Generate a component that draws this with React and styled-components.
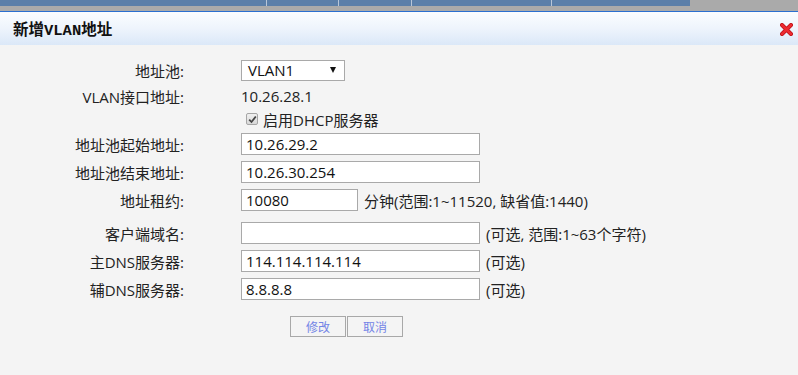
import React from 'react'
import styled, { createGlobalStyle } from 'styled-components'

const GlobalStyle = createGlobalStyle`
  html, body {
    margin: 0;
    padding: 0;
    background: #f4f4f4;
  }
  body {
    font-family: "Open Sans", "Noto Sans CJK SC", sans-serif;
    color: #222;
  }
`

const Page = styled.div`
  width: 798px;
  height: 375px;
  overflow: hidden;
  background: #f4f4f4;
`

const TopNav = styled.div`
  display: flex;
  height: 6px;
  background: #aaaaaa;
  border-bottom: 5px solid #aaaaaa;
`

const NavTab = styled.div`
  width: ${p => p.w}px;
  background: #5b7fa9;
  border-right: 1px solid #b8c6d8;
  &:last-child {
    border-right: none;
  }
`

const TitleBar = styled.div`
  height: 33px;
  border-top: 1px solid #2b6fd0;
  background: linear-gradient(to bottom, #fbfdff 0%, #eef4fc 50%, #dbe8f8 100%);
  display: flex;
  align-items: center;
  justify-content: space-between;
  padding: 0 5px 0 13px;
`

const Title = styled.h1`
  margin: 0;
  font-family: "Liberation Mono", "Noto Sans CJK SC", monospace;
  font-weight: bold;
  font-size: 15.5px;
  color: #111;
`

const CloseBtn = styled.svg`
  width: 13px;
  height: 13px;
  margin-top: 1px;
`

const Form = styled.div`
  display: flex;
  flex-direction: column;
  padding-top: 11px;
`

const Row = styled.div`
  display: grid;
  grid-template-columns: 184px 1fr;
  column-gap: 57px;
  align-items: center;
  height: ${p => p.h || 28}px;
  margin-top: ${p => p.mt || 0}px;
`

const Label = styled.div`
  text-align: right;
  font-size: 15px;
  color: #222;
  white-space: nowrap;
`

const Field = styled.div`
  display: flex;
  align-items: center;
  gap: 6px;
  font-size: 15px;
  color: #222;
  white-space: nowrap;
`

const TextInput = styled.div`
  box-sizing: border-box;
  width: ${p => p.w || 239}px;
  height: 22px;
  border: 1px solid #a9a9a9;
  background: #fff;
  padding: 0 4px;
  font-size: 15px;
  line-height: 20px;
  color: #111;
`

const SelectBox = styled.div`
  box-sizing: border-box;
  width: 104px;
  height: 21px;
  border: 1px solid #a9a9a9;
  background: #fff;
  display: flex;
  align-items: center;
  justify-content: space-between;
  padding: 0 8px 0 6px;
  font-size: 15px;
  color: #111;
`

const Arrow = styled.span`
  width: 0;
  height: 0;
  border-left: 3.5px solid transparent;
  border-right: 3.5px solid transparent;
  border-top: 6px solid #111;
`

const Check = styled.span`
  box-sizing: border-box;
  width: 12px;
  height: 12px;
  margin-left: 5px;
  border: 1px solid #a6a6a6;
  border-radius: 2px;
  background: linear-gradient(to bottom, #f0f0f0, #d8d8d8);
  display: flex;
  align-items: center;
  justify-content: center;
`

const CheckText = styled.span`
  font-size: 15px;
  margin-left: -1px;
`

const Hint = styled.span`
  font-size: 15px;
  color: #222;
`

const Buttons = styled.div`
  display: flex;
  gap: 1px;
  margin: 13px 0 0 290px;
`

const Button = styled.button`
  box-sizing: border-box;
  width: 56px;
  height: 21px;
  border: 1px solid #a8a8a8;
  background: #f4f4f4;
  color: #7384e6;
  font-family: "Noto Sans CJK SC", sans-serif;
  font-size: 12px;
  padding: 0;
  line-height: 19px;
`

const tabs = [266, 71, 72, 139, 138]

const App = () => {
  return (
    <Page>
      <GlobalStyle />
      <TopNav>
        {tabs.map((w, i) => <NavTab key={i} w={w} />)}
      </TopNav>
      <TitleBar>
        <Title>新增VLAN地址</Title>
        <CloseBtn viewBox="0 0 13 13">
          <path d="M2 2 L11 11 M11 2 L2 11" stroke="#b80d14" strokeWidth="4" strokeLinecap="round" />
          <path d="M2 2 L11 11 M11 2 L2 11" stroke="#ec2a30" strokeWidth="2.6" strokeLinecap="round" />
        </CloseBtn>
      </TitleBar>
      <Form>
        <Row h={28}>
          <Label>地址池:</Label>
          <Field>
            <SelectBox>VLAN1<Arrow /></SelectBox>
          </Field>
        </Row>
        <Row h={24}>
          <Label>VLAN接口地址:</Label>
          <Field>10.26.28.1</Field>
        </Row>
        <Row h={22}>
          <Label />
          <Field>
            <Check>
              <svg width="9" height="9" viewBox="0 0 9 9">
                <path d="M1.2 4.6 L3.5 7 L7.8 1.5" fill="none" stroke="#444" strokeWidth="1.8" />
              </svg>
            </Check>
            <CheckText>启用DHCP服务器</CheckText>
          </Field>
        </Row>
        <Row>
          <Label>地址池起始地址:</Label>
          <Field><TextInput>10.26.29.2</TextInput></Field>
        </Row>
        <Row>
          <Label>地址池结束地址:</Label>
          <Field><TextInput>10.26.30.254</TextInput></Field>
        </Row>
        <Row>
          <Label>地址租约:</Label>
          <Field>
            <TextInput w={117}>10080</TextInput>
            <Hint>分钟(范围:1~11520, 缺省值:1440)</Hint>
          </Field>
        </Row>
        <Row mt={5}>
          <Label>客户端域名:</Label>
          <Field>
            <TextInput />
            <Hint>(可选, 范围:1~63个字符)</Hint>
          </Field>
        </Row>
        <Row>
          <Label>主DNS服务器:</Label>
          <Field>
            <TextInput>114.114.114.114</TextInput>
            <Hint>(可选)</Hint>
          </Field>
        </Row>
        <Row>
          <Label>辅DNS服务器:</Label>
          <Field>
            <TextInput>8.8.8.8</TextInput>
            <Hint>(可选)</Hint>
          </Field>
        </Row>
        <Buttons>
          <Button>修改</Button>
          <Button>取消</Button>
        </Buttons>
      </Form>
    </Page>
  )
}

export default App
